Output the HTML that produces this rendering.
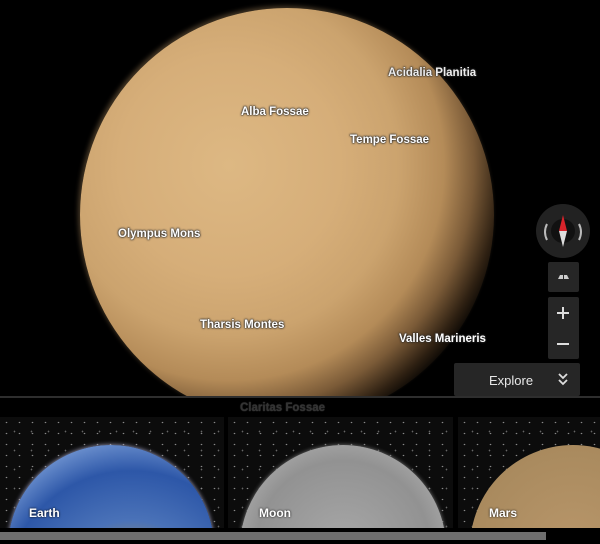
<!DOCTYPE html>
<html><head><style>
*{margin:0;padding:0;box-sizing:border-box}
html,body{width:600px;height:544px;overflow:hidden}
body{background:#000;position:relative;font-family:"Liberation Sans",sans-serif}
.mars{position:absolute;left:80px;top:8px;width:414px;height:414px;border-radius:50%;
background:radial-gradient(circle 290px at 36% 38%,#ddb883 0px,#d6ae79 110px,#cba36e 170px,#b48b58 215px,#7a5a37 245px,#2e2012 272px,#000 290px);
box-shadow:-2px -2px 5px rgba(200,160,110,.35)}
.lbl{position:absolute;color:#fff;font-size:11.5px;font-weight:bold;text-shadow:0 0 2px #333,0 0 2px #333,0 0 1px #000}
.strip{position:absolute;left:0;top:396px;width:600px;height:2px;background:#2e2e2e}
.blk{position:absolute;left:0;top:398px;width:600px;height:19px;background:#000}
.card{position:absolute;top:417px;height:111px;overflow:hidden;background:#0c0c0c;
background-image:radial-gradient(#888 0.6px,transparent 1px),radial-gradient(#666 0.6px,transparent 1px);background-size:13px 11px,17px 19px;background-position:0 0,6px 5px}
.pl{position:absolute;width:206px;height:206px;border-radius:50%;top:28px}
.cl{position:absolute;bottom:8px;color:#fff;font-size:12px;font-weight:bold;text-shadow:0 0 2px #000}
.btn{position:absolute;background:#262626;border-radius:2px}
</style></head><body>
<div class="mars"></div>
<div class="lbl" style="left:388px;top:67px;color:#eee">Acidalia Planitia</div>
<div class="lbl" style="left:241px;top:106px">Alba Fossae</div>
<div class="lbl" style="left:350px;top:134px">Tempe Fossae</div>
<div class="lbl" style="left:118px;top:228px">Olympus Mons</div>
<div class="lbl" style="left:200px;top:319px">Tharsis Montes</div>
<div class="lbl" style="left:399px;top:333px">Valles Marineris</div>
<div class="strip"></div>
<div class="blk"></div>
<div class="lbl" style="left:240px;top:402px;color:#333;text-shadow:0 0 1px #555">Claritas Fossae</div>
<div class="btn" style="left:454px;top:363px;width:126px;height:33px"></div>
<div style="position:absolute;left:489px;top:373px;color:#e8e8e8;font-size:13px">Explore</div>
<svg style="position:absolute;left:556px;top:371px" width="14" height="16"><path d="M3 3 L7 7 L11 3 M3 9 L7 13 L11 9" stroke="#ddd" stroke-width="1.8" fill="none"/></svg>
<div style="position:absolute;left:536px;top:204px;width:54px;height:54px;border-radius:50%;background:#222"></div>
<svg style="position:absolute;left:536px;top:204px" width="54" height="54">
<circle cx="27" cy="27" r="12" fill="#111"/>
<polygon points="27,11 23,27 31,27" fill="#d8232a"/>
<polygon points="27,43 23,27 31,27" fill="#ddd"/>
<path d="M11 20 Q7 28 11 36" stroke="#bbb" stroke-width="2" fill="none"/>
<path d="M43 20 Q47 28 43 36" stroke="#bbb" stroke-width="2" fill="none"/>
</svg>
<div class="btn" style="left:548px;top:262px;width:31px;height:30px"></div>
<svg style="position:absolute;left:548px;top:262px" width="31" height="30"><path d="M10 17 L12 13 L15 13 L15 17 Z M16 17 L16 13 L19 13 L21 17Z" fill="#ccc"/></svg>
<div class="btn" style="left:548px;top:297px;width:31px;height:62px"></div>
<div style="position:absolute;left:557px;top:312px;width:12px;height:2px;background:#ddd"></div>
<div style="position:absolute;left:562px;top:307px;width:2px;height:12px;background:#ddd"></div>
<div style="position:absolute;left:557px;top:343px;width:12px;height:2px;background:#ddd"></div>
<div class="card" style="left:0;width:224px"><div class="pl" style="left:8px;background:radial-gradient(circle at 60% 75%,#c09a6a 0%,#8f8a70 22%,#4a72b8 40%,#2d57a8 65%,#6f93d0 82%,#1a3a7a 100%);box-shadow:0 0 5px #aac"></div><div class="cl" style="left:29px">Earth</div></div>
<div class="card" style="left:228px;width:225px"><div class="pl" style="left:12px;background:radial-gradient(circle at 50% 50%,#a8a8a8,#929292 60%,#bdbdbd 95%);box-shadow:0 0 4px #777"></div><div class="cl" style="left:31px">Moon</div></div>
<div class="card" style="left:458px;width:142px"><div class="pl" style="left:12px;background:radial-gradient(circle at 50% 50%,#b8966a,#a98a5e 70%,#c9a575 95%)"></div><div class="cl" style="left:31px">Mars</div></div>
<div style="position:absolute;left:0;top:532px;width:546px;height:8px;background:#6e6e6e"></div>
</body></html>
